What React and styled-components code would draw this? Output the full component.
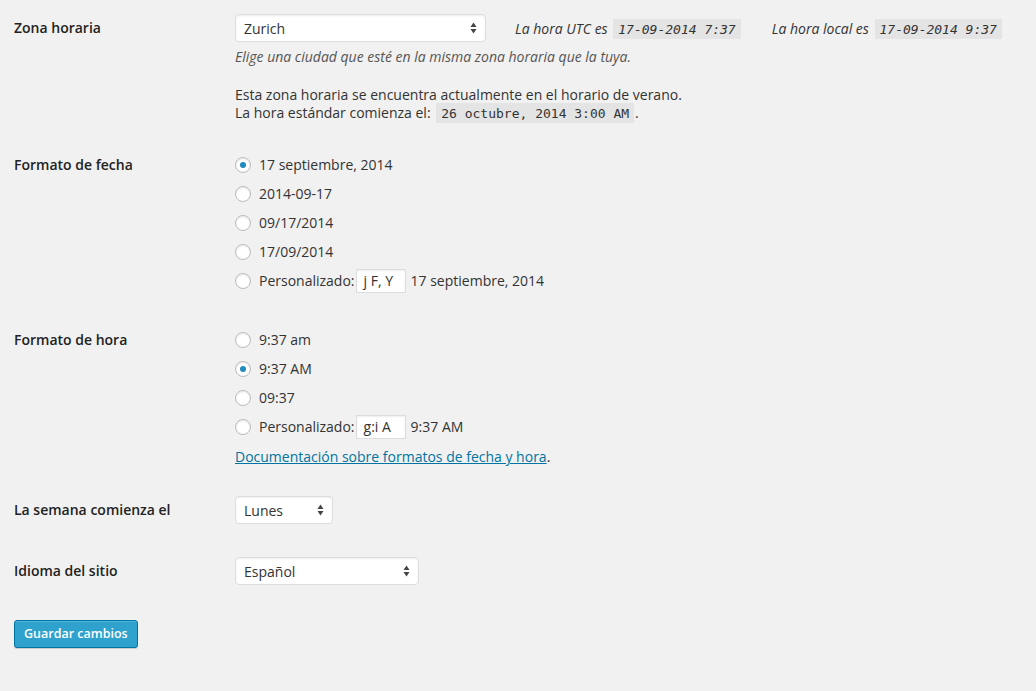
import React from 'react';
import styled, { createGlobalStyle } from 'styled-components';

const GlobalStyle = createGlobalStyle`
    html, body {
        margin: 0;
        padding: 0;
        background: #f1f1f1;
    }
    body {
        font-family: "Open Sans", "Liberation Sans", sans-serif;
        font-size: 14px;
        color: #444;
    }
`

const dateFormats = ['17 septiembre, 2014', '2014-09-17', '09/17/2014', '17/09/2014'];
const timeFormats = ['9:37 am', '9:37 AM', '09:37'];

function SelectArrows() {
    return (
        <svg width="7" height="12" viewBox="0 0 7 12">
            <path d="M3.5 0.5 L6.5 5 L0.5 5 Z" fill="#444" />
            <path d="M3.5 11.5 L6.5 7 L0.5 7 Z" fill="#444" />
        </svg>
    );
}

function Select({ value, width }) {
    return (
        <SelectBox $width={width}>
            <span>{value}</span>
            <SelectArrows />
        </SelectBox>
    );
}

function Radio({ checked, children }) {
    return (
        <RadioRow>
            <RadioCircle $checked={checked} />
            {children}
        </RadioRow>
    );
}

function App() {
    return (
        <>
            <GlobalStyle />
            <Page>
                <Row $top={14} $bottom={27}>
                    <Label $h={28}>Zona horaria</Label>
                    <Field>
                        <TimezoneLine>
                            <Select value="Zurich" width={251} />
                            <TimeInfo>
                                La hora UTC es <Code>17-09-2014 7:37</Code>
                            </TimeInfo>
                            <TimeInfo>
                                La hora local es <Code>17-09-2014 9:37</Code>
                            </TimeInfo>
                        </TimezoneLine>
                        <Description>Elige una ciudad que esté en la misma zona horaria que la tuya.</Description>
                        <Paragraph>
                            Esta zona horaria se encuentra actualmente en el horario de verano.
                            <br />
                            La hora estándar comienza el: <Code $upright>26 octubre, 2014 3:00 AM</Code>.
                        </Paragraph>
                    </Field>
                </Row>

                <Row $top={0} $bottom={30}>
                    <Label $h={29}>Formato de fecha</Label>
                    <Field>
                        {dateFormats.map((f, i) => (
                            <Radio key={f} checked={i === 0}>{f}</Radio>
                        ))}
                        <Radio>
                            Personalizado:<CustomInput>j F, Y</CustomInput>
                            <Example>17 septiembre, 2014</Example>
                        </Radio>
                    </Field>
                </Row>

                <Row $top={0} $bottom={30}>
                    <Label $h={29}>Formato de hora</Label>
                    <Field>
                        {timeFormats.map((f, i) => (
                            <Radio key={f} checked={i === 1}>{f}</Radio>
                        ))}
                        <Radio>
                            Personalizado:<CustomInput>g:i A</CustomInput>
                            <Example>9:37 AM</Example>
                        </Radio>
                        <DocLine>
                            <DocLink href="#">Documentación sobre formatos de fecha y hora</DocLink>.
                        </DocLine>
                    </Field>
                </Row>

                <Row $top={0} $bottom={33}>
                    <Label $h={28}>La semana comienza el</Label>
                    <Field>
                        <Select value="Lunes" width={98} />
                    </Field>
                </Row>

                <Row $top={0} $bottom={35}>
                    <Label $h={28}>Idioma del sitio</Label>
                    <Field>
                        <Select value="Español" width={184} />
                    </Field>
                </Row>

                <SubmitButton>Guardar cambios</SubmitButton>
            </Page>
        </>
    );
}

const Page = styled.div`
    padding: 0 14px 40px 14px;
`
const Row = styled.div`
    display: grid;
    grid-template-columns: 220px 1fr;
    padding-top: ${p => p.$top}px;
    padding-bottom: ${p => p.$bottom}px;
`
const Label = styled.div`
    font-weight: 600;
    color: #222;
    line-height: ${p => p.$h}px;
    height: ${p => p.$h}px;
`
const Field = styled.div`
    display: flex;
    flex-direction: column;
    align-items: flex-start;
    padding-left: 1px;
`
const TimezoneLine = styled.div`
    display: flex;
    align-items: center;
`
const SelectBox = styled.div`
    box-sizing: border-box;
    width: ${p => p.$width}px;
    height: 28px;
    display: flex;
    align-items: center;
    justify-content: space-between;
    padding: 0 8px 0 8px;
    background: #fff;
    border: 1px solid #ddd;
    border-radius: 4px;
    box-shadow: inset 0 1px 2px rgba(0, 0, 0, 0.07);
    color: #333;
    font-size: 14px;
`
const TimeInfo = styled.span`
    font-style: italic;
    font-size: 14px;
    color: #333;
    margin-left: 29px;
    &:last-child {
        margin-left: 30px;
    }
`
const Code = styled.code`
    font-family: "DejaVu Sans Mono", "Liberation Mono", monospace;
    font-size: 13px;
    font-style: ${p => (p.$upright ? 'normal' : 'italic')};
    background: #e4e4e4;
    color: #333;
    padding: 3px 5px 2px;
    margin: 0 1px 0 2px;
`
const Description = styled.p`
    margin: 6px 0 0;
    font-style: italic;
    font-size: 14px;
    line-height: 18px;
    color: #555;
`
const Paragraph = styled.p`
    margin: 20px 0 0;
    font-size: 14px;
    line-height: 18px;
    color: #333;
`
const RadioRow = styled.label`
    display: flex;
    align-items: center;
    height: 29px;
    color: #333;
`
const RadioCircle = styled.span`
    box-sizing: border-box;
    width: 16px;
    height: 16px;
    border-radius: 50%;
    border: 1px solid #bbb;
    background: #fff;
    box-shadow: inset 0 1px 2px rgba(0, 0, 0, 0.1);
    margin-right: 8px;
    position: relative;
    &::after {
        content: '';
        display: ${p => (p.$checked ? 'block' : 'none')};
        position: absolute;
        left: 4px;
        top: 4px;
        width: 6px;
        height: 6px;
        border-radius: 50%;
        background: #1e8cbe;
    }
`
const CustomInput = styled.span`
    box-sizing: border-box;
    width: 50px;
    height: 24px;
    line-height: 22px;
    padding: 0 7px;
    background: #fff;
    border: 1px solid #ddd;
    box-shadow: inset 0 1px 2px rgba(0, 0, 0, 0.07);
    margin-left: 1px;
    color: #333;
    white-space: nowrap;
`
const Example = styled.span`
    margin-left: 5px;
`
const DocLine = styled.p`
    margin: 7px 0 0;
    line-height: 18px;
    color: #333;
`
const DocLink = styled.a`
    color: #0074a2;
    text-decoration: underline;
`
const SubmitButton = styled.button`
    height: 28px;
    padding: 0 9px 1px;
    font-family: "Open Sans", "Liberation Sans", sans-serif;
    font-size: 12.5px;
    font-weight: 600;
    color: #fff;
    background: #2ea2cc;
    border: 1px solid #0074a2;
    border-radius: 3px;
    box-shadow: inset 0 1px 0 rgba(120, 200, 230, 0.5), 0 1px 0 rgba(0, 0, 0, 0.15);
`

export default App;
